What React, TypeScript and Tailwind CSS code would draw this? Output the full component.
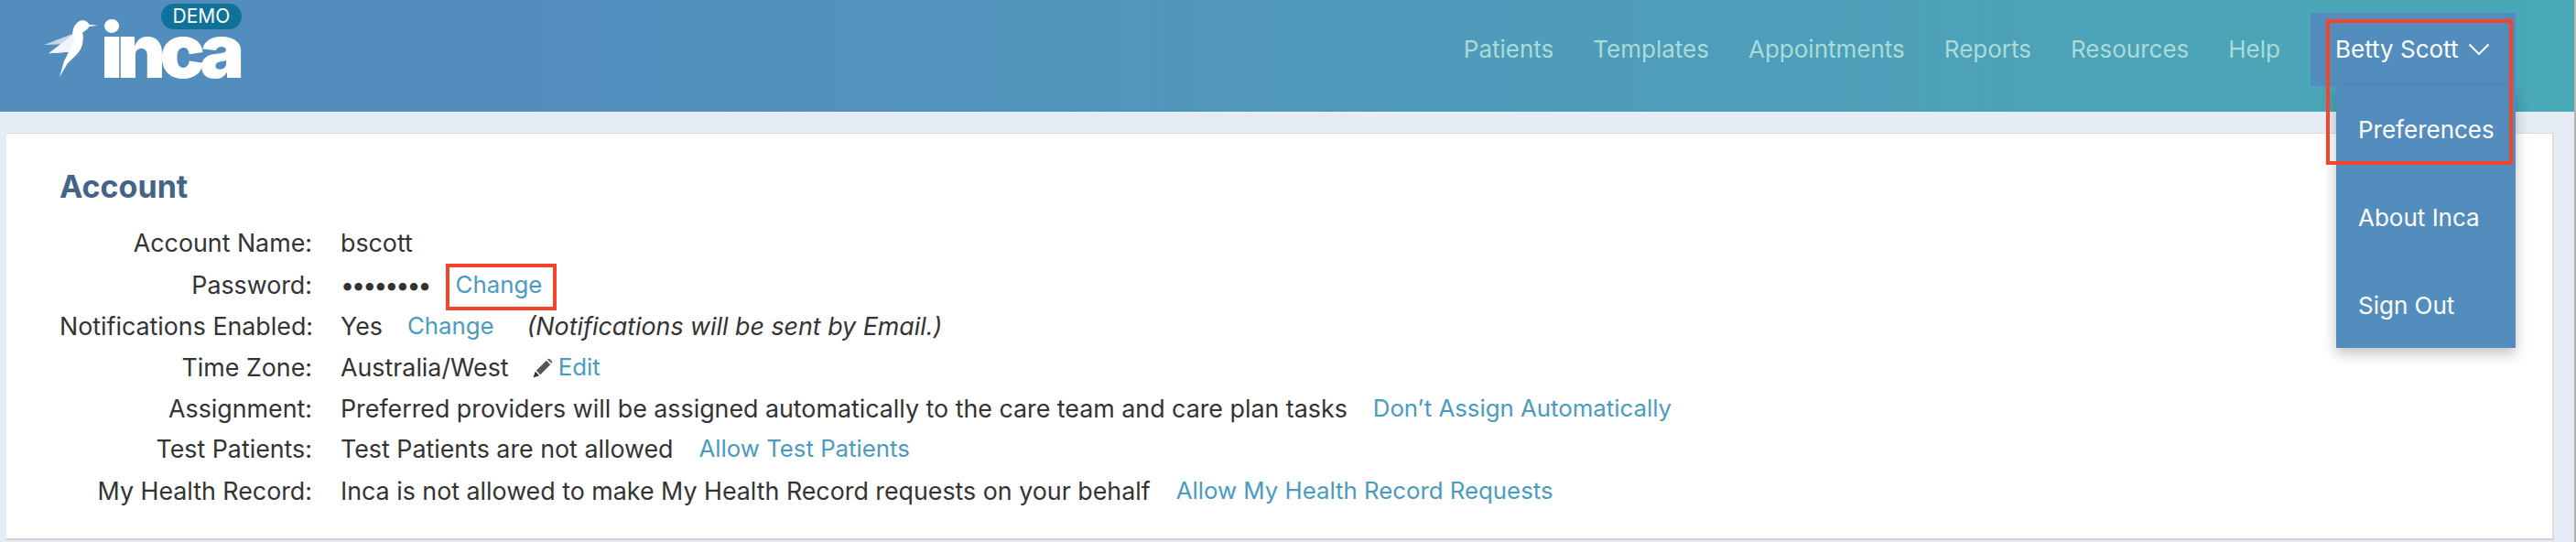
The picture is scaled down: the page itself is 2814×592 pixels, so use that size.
import React from 'react';

const navItems = ['Patients', 'Templates', 'Appointments', 'Reports', 'Resources', 'Help'];

const Link: React.FC<{ children: React.ReactNode; className?: string }> = ({ children, className = '' }) => (
  <a className={`text-[25.8px] text-[#4b9bbf] ${className}`}>{children}</a>
);

const Row: React.FC<{ label: string; h: string; children: React.ReactNode }> = ({ label, h, children }) => (
  <div className={`flex items-center ${h}`}>
    <div className="w-[276px] shrink-0 text-right whitespace-nowrap">{label}</div>
    <div className="ml-[31px] flex items-center whitespace-nowrap">{children}</div>
  </div>
);

const Bird = () => (
  <svg width="62" height="64" viewBox="0 0 62 64" className="shrink-0">
    <path d="M1.3 28 L32 16 L33 20 L21.3 27.3 Z" fill="#c3d7e9" />
    <path d="M32.3 14.7 C33 7 38 1.5 43 1.3 C46.5 1.2 49 3 50.3 5.7 L59.7 6.7 L50.3 8 C49 11 46 13 43 14.7 C44 17 44 20 43.7 22.3 C43.5 31 39 36.5 34.7 40.7 C30 45 28 47 26.3 49 L18 63.3 L23 45.7 L28 35.7 L6.3 37.3 L32.3 17.3 Z" fill="#ffffff" />
    <path d="M6.3 37.3 L32.3 17.3 L35 22 L28 35.7 Z" fill="#f1f5fa" />
  </svg>
);

const Pencil = () => (
  <svg width="22" height="22" viewBox="0 0 20 20" className="ml-[26px] shrink-0">
    <path d="M0.5 19.5 L2.5 13.5 L6.5 17.5 Z" fill="#333333" />
    <path d="M3.5 12.5 L13.5 2.5 L17.5 6.5 L7.5 16.5 Z" fill="#555555" />
    <path d="M14.5 1.5 C15.5 0.5 16.5 0.5 17.5 1.5 L18.5 2.5 C19.5 3.5 19.5 4.5 18.5 5.5 Z" fill="#666666" />
  </svg>
);

export default function App() {
  return (
    <div className="relative h-[592px] w-[2814px] overflow-hidden bg-[#e6ecf6] text-[26px] text-[#333333] border-r-2 border-[#b5b5b5] font-['Inter',sans-serif]">
      <header className="flex h-[122px] items-start bg-gradient-to-r from-[#538dbe] from-20% to-[#49a9b5]">
        <div className="flex items-start pl-[47px] pt-[21px]">
          <Bird />
          <div className="relative ml-[1px] w-[156px]">
            <span className="block text-[82px] leading-[70px] font-black tracking-[-6.5px] text-white">inca</span>
            <span className="absolute left-[66px] top-[-17px] flex h-[28px] w-[88px] items-center justify-center rounded-full bg-[#107299] text-[21px] leading-[28px] text-white">DEMO</span>
          </div>
        </div>
        <nav className="ml-auto flex items-start pt-[14px] pr-[64px]">
          <div className="flex h-[80px] items-center gap-[43px] pb-[1px] text-[#abdbd7]">
            {navItems.map(item => (
              <span key={item}>{item}</span>
            ))}
          </div>
          <div className="relative ml-[33px] flex h-[80px] w-[224px] items-center bg-[#538dbe] pb-[2px] pl-[27px] text-white">
            <span>Betty Scott</span>
            <svg width="24" height="14" viewBox="0 0 24 14" fill="none" className="ml-[11px] mt-[1px]">
              <path d="M1.5 1.5 L12 12 L22.5 1.5" stroke="#fff" strokeWidth="2" />
            </svg>
            <div className="absolute right-0 top-[80px] z-10 flex h-[286px] w-[196px] flex-col bg-[#538dbe] shadow-[0_6px_14px_rgba(0,0,0,0.25)]">
              {['Preferences', 'About Inca', 'Sign Out'].map(item => (
                <div key={item} className="flex h-[96px] shrink-0 items-center pb-[2px] pl-[24px]">{item}</div>
              ))}
            </div>
            <div className="absolute left-[17px] top-[7px] z-20 h-[159px] w-[204px] border-[4px] border-[#f4452a]" />
          </div>
        </nav>
      </header>

      <main className="mt-[23px] ml-[7px] h-[445px] w-[2783px] border-r-2 border-b-2 border-t border-[#dcdcdc] border-b-[#d0d0d0] bg-white pl-[58px] pt-[36px] text-[26.8px]">
        <h1 className="text-[34px] leading-[44px] font-bold text-[#436488]">Account</h1>
        <div className="mt-[16px]">
          <Row label="Account Name:" h="h-[46px]">bscott</Row>
          <Row label="Password:" h="h-[46px]">
            <span className="tracking-[-3px]">••••••••</span>
            <Link className="relative ml-[29px]">
              Change
              <span className="absolute left-[-11px] top-[-4px] h-[51px] w-[121px] border-[4px] border-[#f4452a]" />
            </Link>
          </Row>
          <Row label="Notifications Enabled:" h="h-[45px]">
            Yes
            <Link className="ml-[27px]">Change</Link>
            <em className="ml-[36px]">(Notifications will be sent by Email.)</em>
          </Row>
          <Row label="Time Zone:" h="h-[45px]">
            Australia/West
            <Pencil />
            <Link className="ml-[6px]">Edit</Link>
          </Row>
          <Row label="Assignment:" h="h-[44px]">
            Preferred providers will be assigned automatically to the care team and care plan tasks
            <Link className="ml-[28px]">Don’t Assign Automatically</Link>
          </Row>
          <Row label="Test Patients:" h="h-[45px]">
            Test Patients are not allowed
            <Link className="ml-[28px]">Allow Test Patients</Link>
          </Row>
          <Row label="My Health Record:" h="h-[47px]">
            Inca is not allowed to make My Health Record requests on your behalf
            <Link className="ml-[28px]">Allow My Health Record Requests</Link>
          </Row>
        </div>
      </main>
    </div>
  );
}
